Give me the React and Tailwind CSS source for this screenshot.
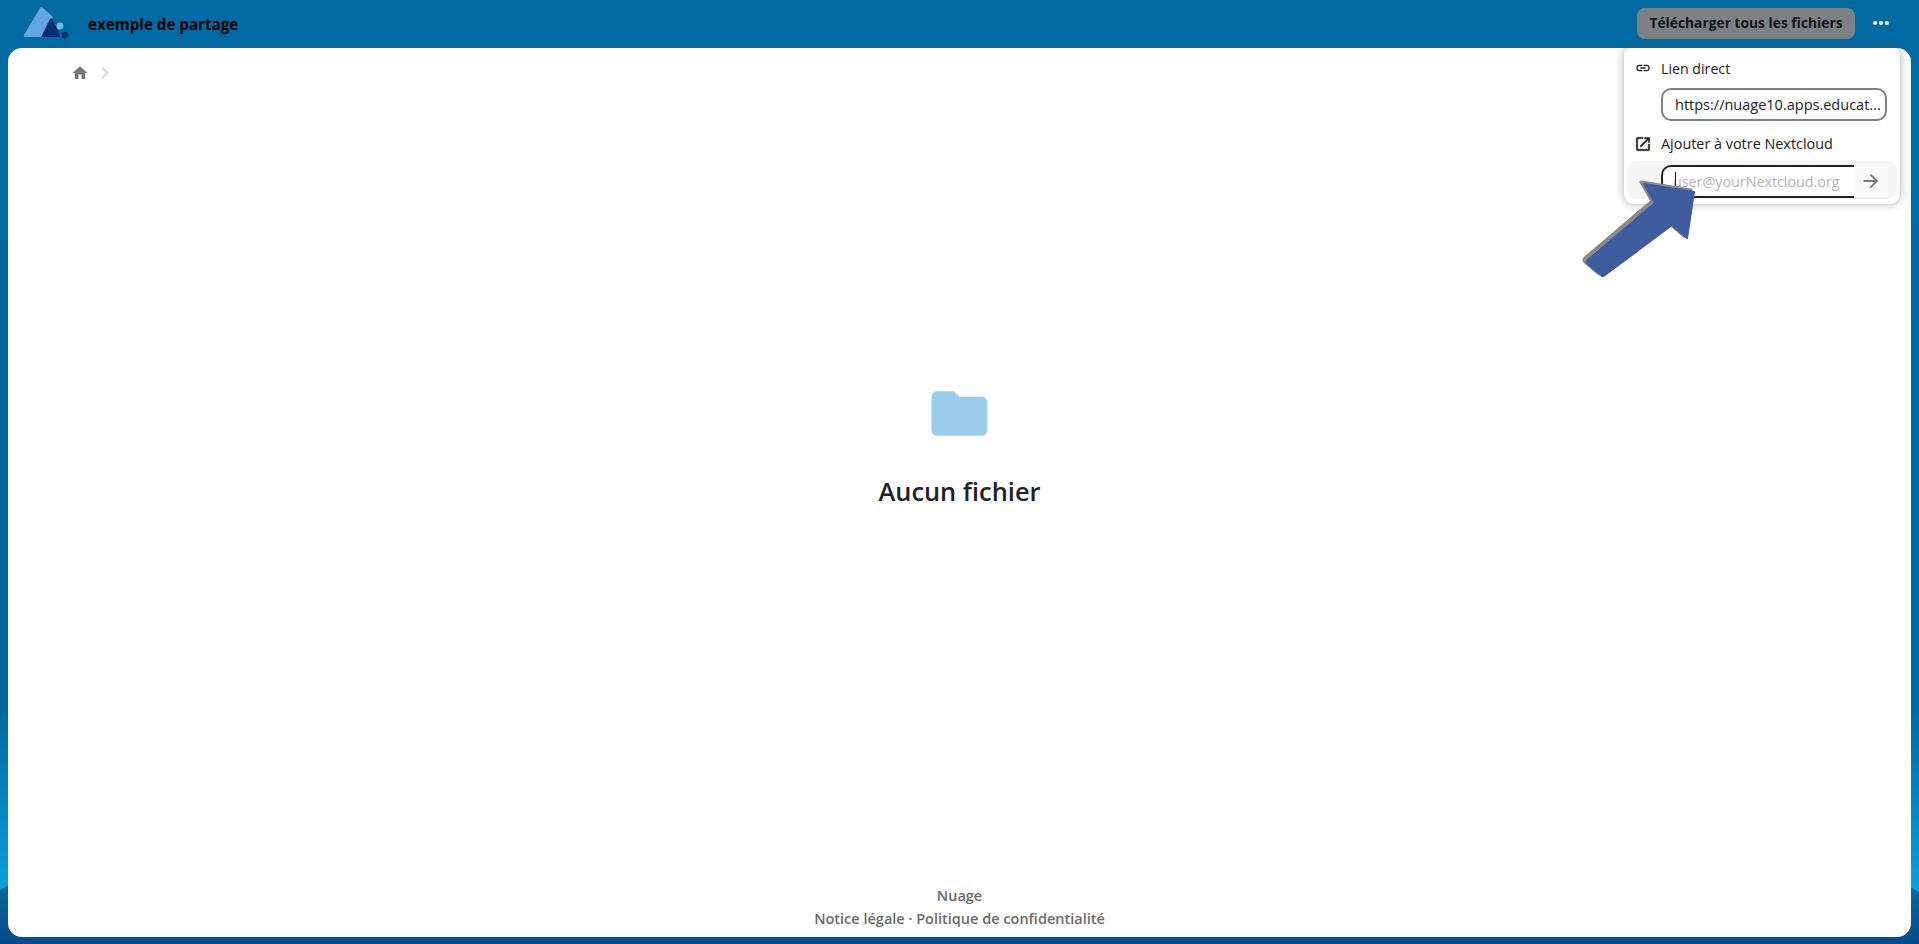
import React from "react";
import { ChevronRight, Ellipsis } from "lucide-react";

const font = "font-['Open_Sans','Noto_Sans',sans-serif]";

function Logo() {
  return (
    <svg width="46" height="34" viewBox="0 0 46 34" className="block -mt-[2px]">
      <path d="M17 2 L1 29 Q0 31 3 31 L19 31 L30 11 L20 2 Q18 0 17 2Z" fill="#64a6e3" />
      <path d="M27 13 L18 31 L36 31 Q38 31 37 29 L30 14 Q28 11 27 13Z" fill="#0b2b73" />
      <circle cx="37" cy="20" r="3.4" fill="#7db4e6" />
      <circle cx="42" cy="29" r="3.2" fill="#0b2b73" />
    </svg>
  );
}

function LinkIcon() {
  return (
    <svg width="16" height="16" viewBox="0 0 24 24" fill="#222">
      <path d="M3.9,12C3.9,10.29 5.29,8.9 7,8.9H11V7H7A5,5 0 0,0 2,12A5,5 0 0,0 7,17H11V15.1H7C5.29,15.1 3.9,13.71 3.9,12M8,13H16V11H8V13M17,7H13V8.9H17C18.71,8.9 20.1,10.29 20.1,12C20.1,13.71 18.71,15.1 17,15.1H13V17H17A5,5 0 0,0 22,12A5,5 0 0,0 17,7Z" />
    </svg>
  );
}

function ExternalIcon() {
  return (
    <svg width="18" height="18" viewBox="0 0 24 24" fill="#222" stroke="#222" strokeWidth="0.6">
      <path d="M14,3V5H17.59L7.76,14.83L9.17,16.24L19,6.41V10H21V3M19,19H5V5H12V3H5C3.89,3 3,3.9 3,5V19A2,2 0 0,0 5,21H19A2,2 0 0,0 21,19V12H19V19Z" />
    </svg>
  );
}

function Popover() {
  return (
    <div className="absolute top-[48px] right-[19px] z-10 w-[276px] h-[156px] bg-white rounded-b-[10px] rounded-t-[6px] shadow-[0_0_10px_rgba(77,77,77,0.45)] text-[#222]">
      <div className="flex items-center h-[40px] pl-[11px] gap-[10px] text-[14.2px]">
        <span className="w-4 flex justify-center"><LinkIcon /></span>
        <span className="pt-[1px]">Lien direct</span>
      </div>
      <div className="ml-[37px] w-[226px] h-[33px] border-2 border-[#808080] rounded-[10px] flex items-center pl-[12px] text-[14.5px] whitespace-nowrap overflow-hidden">
        https://nuage10.apps.educat...
      </div>
      <div className="flex items-center h-[42px] pl-[10px] gap-[9px] mt-[2px] text-[14.4px]">
        <span className="w-[18px] flex justify-center"><ExternalIcon /></span>
        <span>Ajouter à votre Nextcloud</span>
      </div>
      <div className="mx-[3px] h-[38px] -mt-[4px] bg-[#f5f5f5] rounded-[10px] flex items-start pl-[34px]">
        <div className="relative w-[193px] h-[33px] mt-[4px] border-2 border-r-0 border-[#222] rounded-l-[10px] bg-white flex items-center pl-[10px] text-[14.3px] text-[#b4b4b4] whitespace-nowrap">
          <span className="absolute left-[12px] top-[5px] w-px h-[19px] bg-[#222]" />
          user@yourNextcloud.org
        </div>
        <div className="w-[34px] h-[33px] mt-[3px] flex items-center justify-center bg-[#fafafa]">
          <svg width="22" height="22" viewBox="0 0 24 24" fill="#7a7a7a">
            <path d="M4,11V13H16L10.5,18.5L11.92,19.92L19.84,12L11.92,4.08L10.5,5.5L16,11H4Z" />
          </svg>
        </div>
      </div>
    </div>
  );
}

// annotation arrow drawn on top of the screenshot
function Annotation() {
  return (
    <svg width="125" height="105" viewBox="0 0 125 105" className="absolute left-[1578px] top-[180px] z-20">
      <path d="M66 4 L116 12 L109 58 L94 45 L27 95 Q25 97 23 95 L10 84 Q8 82 10 80 L77 23Z" fill="#8a8a8a" transform="translate(-3 -2)" stroke="#8a8a8a" strokeWidth="3" strokeLinejoin="round" />
      <path d="M66 4 L116 12 L109 58 L94 45 L27 95 Q25 97 23 95 L10 84 Q8 82 10 80 L77 23Z" fill="#3f5c9f" stroke="#3f5c9f" strokeWidth="2" strokeLinejoin="round" />
    </svg>
  );
}

export default function App() {
  return (
    <div className={`relative h-screen overflow-hidden flex flex-col ${font} bg-[linear-gradient(180deg,#006aa3_0%,#0068a3_75%,#0a9fdb_94%,#0aa5e0_100%)]`}>
      {/* wave at the bottom */}
      <svg className="absolute left-0 bottom-0 w-full h-[62px]" viewBox="0 0 1919 62" preserveAspectRatio="none">
        <defs>
          <linearGradient id="wave" x1="0" y1="0" x2="0" y2="1">
            <stop offset="0" stopColor="#0a6aa3" />
            <stop offset="1" stopColor="#044a8a" />
          </linearGradient>
        </defs>
        <path d="M0 8 Q6 5 10 2 L1908 2 Q1912 7 1919 10 L1919 62 L0 62Z" fill="url(#wave)" />
      </svg>

      {/* header */}
      <header className="relative h-12 shrink-0 flex items-center pl-[23px] pr-[13px]">
        <Logo />
        <h1 className="ml-[19px] font-bold text-[15.2px] text-black">exemple de partage</h1>
        <button className="ml-auto -mt-[2px] w-[218px] h-[31px] rounded-[8px] bg-[#7c8186] text-[13.8px] font-bold text-[#111] whitespace-nowrap">
          Télécharger tous les fichiers
        </button>
        <span className="w-[51px] -mt-[2px] flex justify-center text-white">
          <Ellipsis size={20} strokeWidth={3} />
        </span>
      </header>

      <Popover />
      <Annotation />

      {/* main card */}
      <main className="relative flex-1 mx-2 mb-[7px] bg-white rounded-[14px] flex flex-col">
        <div className="flex items-center h-[48px] pl-[63px] gap-[6px]">
          <svg width="18" height="18" viewBox="0 0 24 24" fill="#757575" className="mt-[2px]">
            <path d="M10,20V14H14V20H19V12H22L12,3L2,12H5V20H10Z" />
          </svg>
          <ChevronRight size={20} className="text-[#cfcfcf] mt-[2px]" />
        </div>

        <div className="flex-1 flex flex-col items-center pt-[284px]">
          <svg width="67" height="67" viewBox="0 0 24 24" fill="#9acdec">
            <path d="M10,4H4C2.89,4 2,4.89 2,6V18A2,2 0 0,0 4,20H20A2,2 0 0,0 22,18V8C22,6.89 21.1,6 20,6H12L10,4Z" />
          </svg>
          <h2 className="mt-[25px] text-[25.4px] font-semibold text-[#222]">Aucun fichier</h2>
        </div>

        <footer className="pb-[7px] text-center text-[14.5px] leading-[23px] font-semibold text-[#6b6b6b]">
          <p>Nuage</p>
          <p>Notice légale · Politique de confidentialité</p>
        </footer>
      </main>
    </div>
  );
}
